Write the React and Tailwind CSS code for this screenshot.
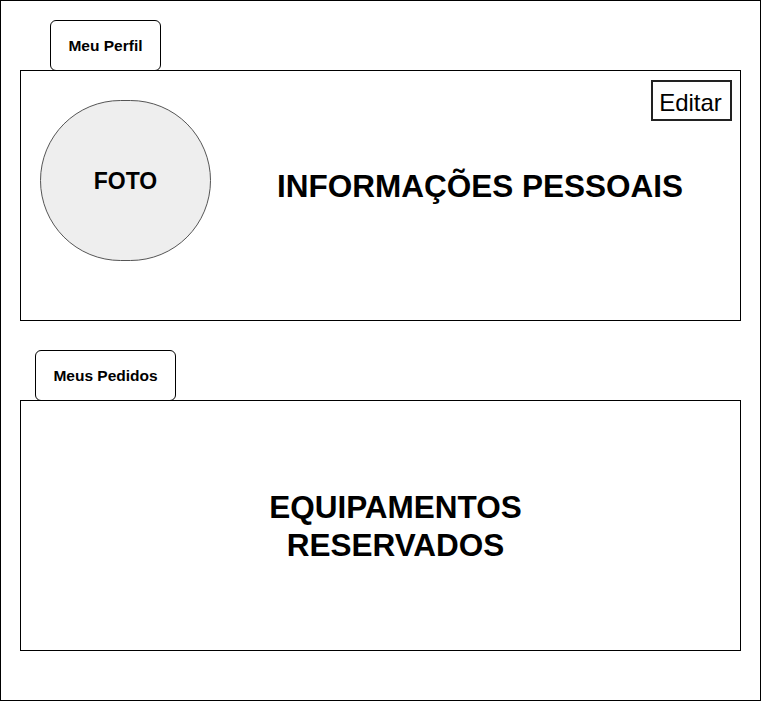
export default function App() {
  return (
    <div className="w-[761px] h-[701px] border border-black bg-white pt-[19px] pl-[19px] font-['Liberation_Sans',Arial,sans-serif] text-black">
      {/* Meu Perfil */}
      <div className="ml-[30px] -mb-px w-[111px] h-[51px] border border-black rounded-[6px] flex items-center justify-center text-[15.5px] font-bold">
        Meu Perfil
      </div>
      <div className="w-[721px] h-[251px] border border-black flex items-start">
        <div className="ml-[19px] mt-[29px] w-[171px] h-[161px] shrink-0 rounded-full border border-[#555] bg-[#eeeeee] flex items-center justify-center pt-px text-[23px] font-bold">
          FOTO
        </div>
        <div className="flex-1 flex flex-col">
          <div className="flex justify-end mt-[9px] mr-[8px]">
            <button className="w-[81px] h-[41px] border-2 border-[#222] flex items-center justify-center pt-[4px] pr-[2px] text-[24px] leading-none">
              Editar
            </button>
          </div>
          <div className="pl-[9px] mt-[46px] text-center text-[31.5px] leading-[38px] font-bold">
            INFORMAÇÕES PESSOAIS
          </div>
        </div>
      </div>

      {/* Meus Pedidos */}
      <div className="mt-[29px] ml-[15px] -mb-px w-[141px] h-[51px] border border-black rounded-[6px] flex items-center justify-center text-[15.5px] font-bold">
        Meus Pedidos
      </div>
      <div className="w-[721px] h-[251px] border border-black flex items-center justify-center pl-[30px]">
        <div className="text-center text-[31.5px] leading-[38px] font-bold">
          EQUIPAMENTOS
          <br />
          RESERVADOS
        </div>
      </div>
    </div>
  );
}
